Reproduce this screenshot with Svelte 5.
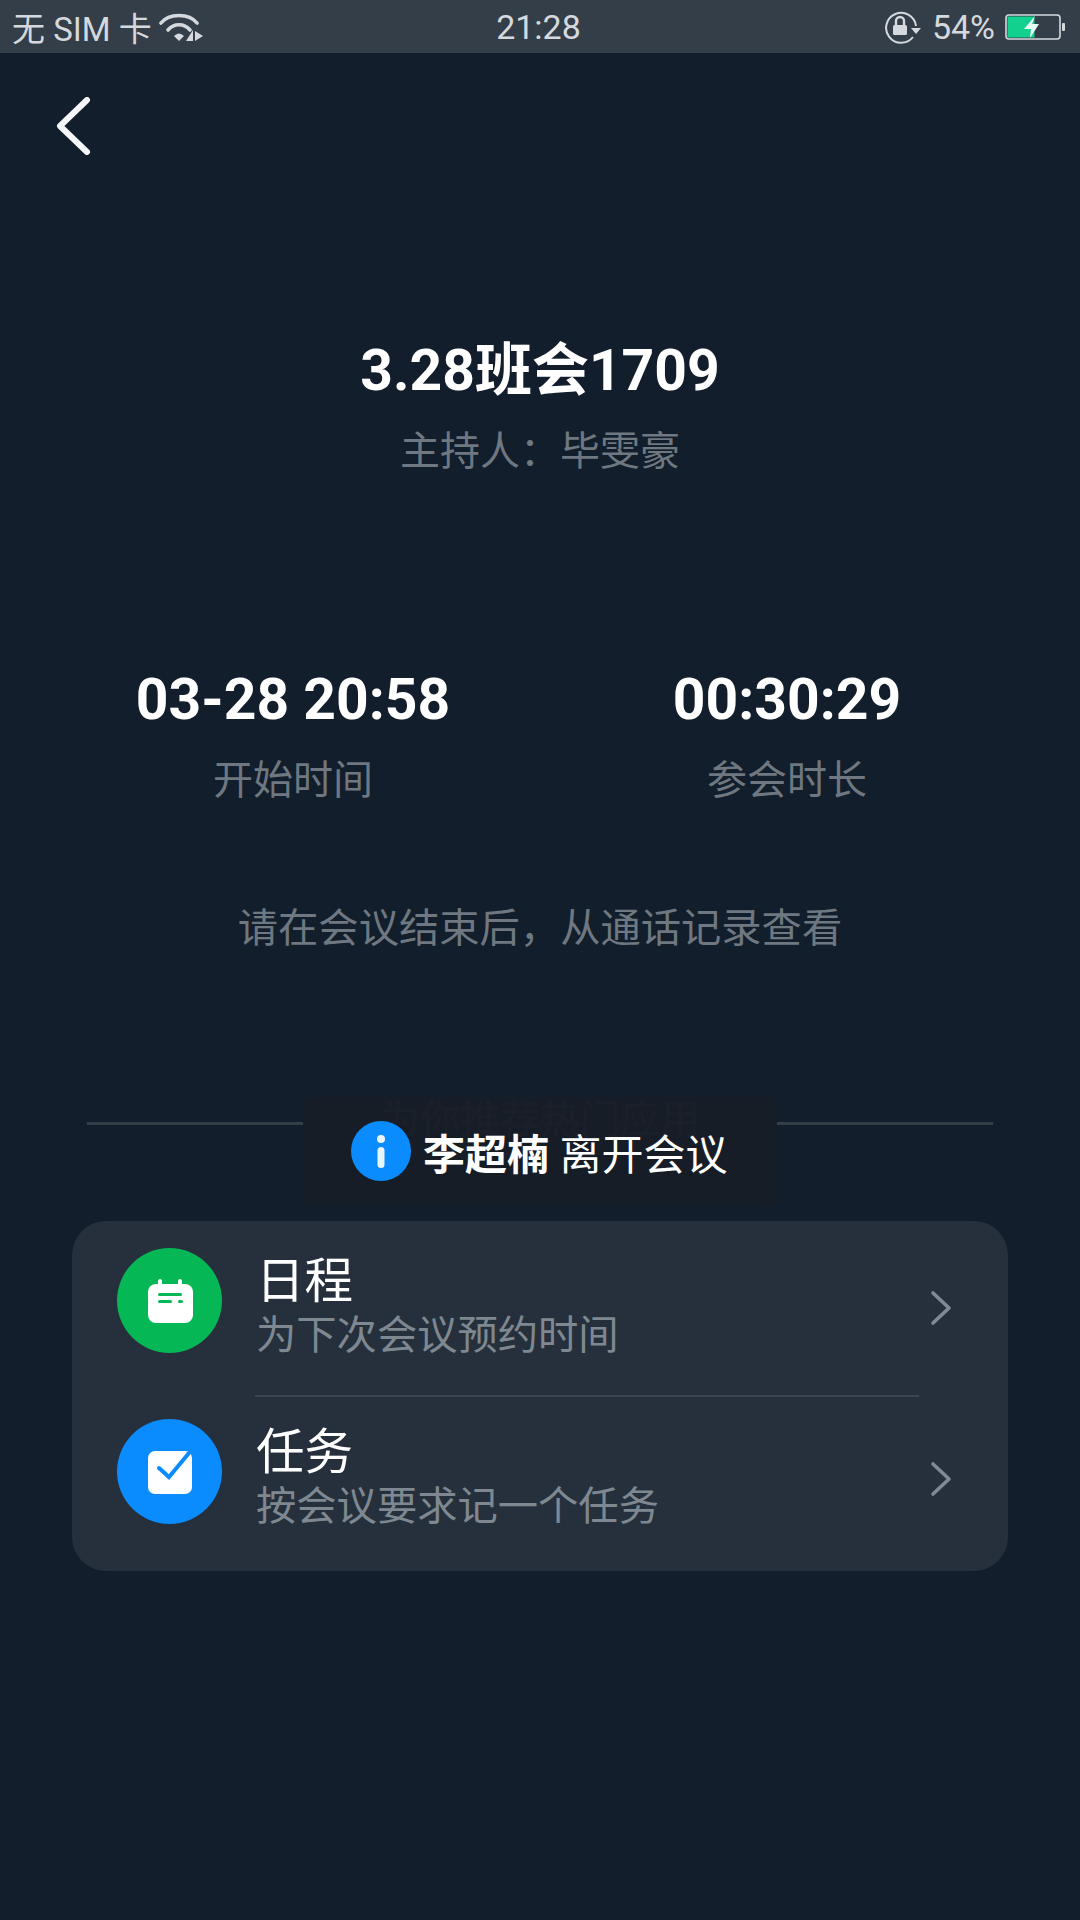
<script>
  const rows = [
    { id: 'cal', color: '#06b755', title: '日程', sub: '为下次会议预约时间' },
    { id: 'task', color: '#0a8cff', title: '任务', sub: '按会议要求记一个任务' }
  ];
</script>

<div class="page">
  <div class="status">
    <div class="st-left">
      <span>无 SIM 卡</span>
      <svg width="44" height="30" viewBox="0 0 44 30" fill="none" stroke="#d5d9dd" stroke-linecap="round">
        <path d="M2 11 C10 1 30 1 38 11" stroke-width="3.6" />
        <path d="M9 18 C15 11 25 11 31 18" stroke-width="3.6" />
        <path d="M15 24 q5 -5 10 0 l-5 5 z" fill="#d5d9dd" stroke="none" />
        <path d="M34 18 V29 H27 Z M36 19 V29 L44 24 Z" fill="#d5d9dd" stroke="none" />
      </svg>
    </div>
    <span class="st-time">21:28</span>
    <div class="st-right">
      <svg width="38" height="34" viewBox="0 0 38 34" fill="none">
        <path d="M29 27 A15 15 0 1 1 32 16" stroke="#d5d9dd" stroke-width="2" />
        <path d="M27 18 H37 L32 24 Z" fill="#d5d9dd" />
        <rect x="9" y="15" width="14" height="10" rx="1.500" fill="#d5d9dd" />
        <path d="M12 15 v-4 a4 4 0 0 1 8 0 v4" stroke="#d5d9dd" stroke-width="2.400" />
      </svg>
      <span class="pct">54%</span>
      <svg width="60" height="28" viewBox="0 0 60 28" fill="none">
        <rect x="1" y="2" width="54" height="24" rx="3" stroke="#d5d9dd" stroke-width="1.600" />
        <rect x="2.500" y="3.500" width="27" height="21" fill="#12d18e" />
        <rect x="57" y="10" width="3" height="8" rx="1" fill="#d5d9dd" />
        <path d="M30 3 L19 16 H26 L25 25 L34 11 H27 Z" fill="#e8fff4" />
      </svg>
    </div>
  </div>

  <button class="back" aria-label="返回">
    <svg width="36" height="58" viewBox="0 0 36 58" fill="none">
      <path d="M31 3 L4 29 L31 55" stroke="#f4f6f8" stroke-width="6" stroke-linecap="round" stroke-linejoin="round" />
    </svg>
  </button>

  <div class="head">
    <h1>3.28班会1709</h1>
    <p>主持人：毕雯豪</p>
  </div>

  <div class="stats">
    <div class="stat">
      <strong>03-28 20:58</strong>
      <span>开始时间</span>
    </div>
    <div class="stat">
      <strong>00:30:29</strong>
      <span>参会时长</span>
    </div>
  </div>

  <p class="hint">请在会议结束后，从通话记录查看</p>

  <div class="section">
    <div class="rule"></div>
    <span class="section-title">为你推荐热门应用</span>
    <div class="toast">
      <svg width="60" height="60" viewBox="0 0 60 60">
        <circle cx="30" cy="30" r="30" fill="#0a8cff" />
        <circle cx="30" cy="18" r="4" fill="#e8f6ff" />
        <rect x="26.500" y="26" width="7" height="21" rx="3.500" fill="#e8f6ff" />
      </svg>
      <span class="toast-text"><b>李超楠</b> 离开会议</span>
    </div>
  </div>

  <div class="card">
    {#each rows as row, i}
      <div class="row">
        <div class="badge" style="background:{row.color}">
          {#if row.id === 'cal'}
            <svg width="46" height="44" viewBox="0 0 46 44">
              <rect x="11" y="0" width="4" height="10" rx="2" fill="#fff" />
              <rect x="31" y="0" width="4" height="10" rx="2" fill="#fff" />
              <rect x="1" y="5" width="45" height="39" rx="8" fill="#fff" />
              <rect x="11" y="14" width="24" height="3" rx="1.500" fill="#06b755" />
              <rect x="11" y="21" width="14" height="3" rx="1.500" fill="#06b755" />
              <rect x="31" y="21" width="5" height="3" rx="1.500" fill="#06b755" />
            </svg>
          {:else}
            <svg width="48" height="46" viewBox="0 0 48 46">
              <rect x="2" y="2" width="44" height="43" rx="7" fill="#fff" />
              <path d="M13 19 L23 28 L43 4" fill="none" stroke="#0a8cff" stroke-width="4" stroke-linecap="round" />
            </svg>
          {/if}
        </div>
        <div class="text">
          <span class="title">{row.title}</span>
          <span class="sub">{row.sub}</span>
        </div>
        <svg class="chev" width="22" height="36" viewBox="0 0 22 36" fill="none">
          <path d="M3 3 L19 18 L3 33" stroke="#7f8a94" stroke-width="3.600" stroke-linecap="round" stroke-linejoin="round" />
        </svg>
      </div>
      {#if i === 0}
        <div class="divider"></div>
      {/if}
    {/each}
  </div>
</div>

<style>
  :global(body) {
    margin: 0;
    background: #121e2b;
  }
  .page {
    width: 1080px;
    height: 1920px;
    background: #121e2b;
    font-family: Roboto, "Noto Sans CJK SC", sans-serif;
    overflow: hidden;
  }
  .status {
    height: 53px;
    background: #343e48;
    color: #d5d9dd;
    font-size: 34px;
    display: grid;
    grid-template-columns: 1fr auto 1fr;
    align-items: center;
    padding: 0 15px 0 12px;
  }
  .st-left {
    display: flex;
    align-items: center;
    gap: 7px;
    font-size: 33px;
  }
  .st-right {
    display: flex;
    align-items: center;
    justify-content: flex-end;
    gap: 10px;
  }
  .back {
    display: block;
    margin: 44px 0 0 56px;
    padding: 0;
    border: 0;
    background: none;
    height: 58px;
  }
  .head {
    margin-top: 184px;
    text-align: center;
  }
  h1 {
    margin: 0;
    font-size: 57px;
    line-height: 64px;
    font-weight: 700;
    color: #fff;
  }
  .head p {
    margin: 24px 0 0;
    font-size: 40px;
    line-height: 50px;
    color: #6f7780;
  }
  .stats {
    margin-top: 191px;
    display: grid;
    grid-template-columns: 586px 402px;
  }
  .stat {
    display: flex;
    flex-direction: column;
    align-items: center;
  }
  .stat strong {
    font-size: 57px;
    line-height: 64px;
    color: #fff;
  }
  .stat span {
    margin-top: 24px;
    font-size: 40px;
    line-height: 50px;
    color: #6f7780;
  }
  .hint {
    margin: 98px 0 0;
    text-align: center;
    font-size: 40.300px;
    line-height: 50px;
    color: #6f7780;
  }
  .section {
    position: relative;
    margin-top: 168px;
    height: 99px;
  }
  .rule {
    position: absolute;
    left: 87px;
    right: 87px;
    top: 0;
    height: 3px;
    background: #333e49;
  }
  .section-title {
    position: absolute;
    left: 0;
    right: 0;
    top: -27px;
    text-align: center;
    font-size: 40px;
    line-height: 50px;
    color: #6f7780;
  }
  .toast {
    position: absolute;
    left: 303px;
    top: -25px;
    width: 474px;
    height: 108px;
    background: rgba(24, 29, 38, 0.97);
    border-radius: 4px;
    display: flex;
    align-items: center;
    gap: 12px;
    padding-left: 48px;
    box-sizing: border-box;
    color: #fff;
    font-size: 42px;
  }
  .toast b {
    font-weight: 700;
  }
  .card {
    margin: 0 72px;
    background: #25303c;
    border-radius: 34px;
    padding: 27px 0 47px;
  }
  .row {
    height: 105px;
    display: flex;
    align-items: flex-start;
    padding-left: 45px;
  }
  .badge {
    width: 105px;
    height: 105px;
    border-radius: 50%;
    display: flex;
    align-items: center;
    justify-content: center;
    flex: none;
  }
  .text {
    display: flex;
    flex-direction: column;
    margin: 7px 0 0 34px;
  }
  .title {
    font-size: 48.500px;
    line-height: 54px;
    color: #fff;
  }
  .sub {
    font-size: 40.300px;
    line-height: 54px;
    color: #7f8890;
  }
  .chev {
    margin: 42px 56px 0 auto;
  }
  .divider {
    height: 2px;
    margin: 42px 89px 22px 183px;
    background: #3a4550;
  }
</style>
